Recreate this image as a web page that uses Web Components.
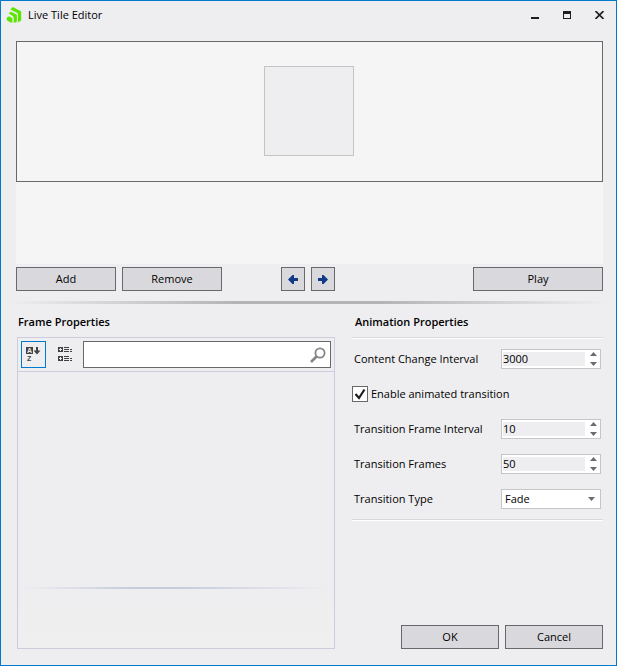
<!DOCTYPE html>
<html lang="en">
<head>
<meta charset="utf-8">
<title>Live Tile Editor</title>
<style>
  body { margin: 0; font: 11px/16px "Open Sans", "Noto Sans", sans-serif; color: #000; background: #eeeef2; }
</style>
</head>
<body>
<tile-editor></tile-editor>
<script>
const base = `:host, *, *::before { box-sizing: border-box; } button, input, select { font: inherit; color: inherit; margin: 0; border-radius: 0; } svg { display: block; }`;

function define(name, template, setup) {
  customElements.define(name, class extends HTMLElement {
    connectedCallback() {
      if (this.shadowRoot) return;
      const root = this.attachShadow({ mode: 'open' });
      root.innerHTML = template(this);
      if (setup) setup(this, root);
    }
  });
}

define('push-button', host => `
  <style>${base}
    :host { display: block; }
    button { display: flex; width: 100%; height: 24px; padding: 0; align-items: center; justify-content: center; background: #d9d9dd; border: 1px solid #696969; }
  </style>
  <button type="button" ${host.getAttribute('label') ? `aria-label="${host.getAttribute('label')}"` : ''}><slot></slot></button>`);

define('title-bar', () => `
  <style>${base}
    :host { display: flex; height: 30px; align-items: center; padding: 0 5px 2px; }
    h1 { font: inherit; margin: 0 auto 0 6px; }
    button { width: 24px; height: 24px; margin-left: 8px; padding: 0; border: 0; background: none; display: grid; place-items: center; }
    button:first-of-type { margin-left: 0; }
  </style>
  <svg width="16" height="16" viewBox="0 0 16 16" fill="#5ce500" aria-hidden="true">
    <path d="M4.400 2.600 6.800 0l8.400 4.400v9l-3.400 2V6.300z"/>
    <path d="M2.600 6.200 5.200 4.400l6 3v5.400l-.8 2.600-3 .2V9.400z"/>
    <path d="M.8 10.600 3.200 9.200l3.400 2v4.300H4.400L.8 13.200z"/>
    <path d="M4 3.800 11.400 7.600v6.800M2.300 8.100l4.800 2.700v4.700" fill="none" stroke="#eeeef2" stroke-width=".8"/>
  </svg>
  <h1>Live Tile Editor</h1>
  <button type="button" aria-label="Minimize"><svg width="8" height="8" shape-rendering="crispEdges"><path fill="#1e1e1e" d="M0 6h8v2H0z"/></svg></button>
  <button type="button" aria-label="Maximize"><svg width="8" height="8" shape-rendering="crispEdges"><path fill="#1e1e1e" fill-rule="evenodd" d="M0 0h8v8H0zM1 3v4h6V3z"/></svg></button>
  <button type="button" aria-label="Close"><svg width="9" height="8" viewBox="0 0 9 8"><path d="M.5 0l8 8M8.500 0l-8 8" stroke="#1e1e1e" stroke-width="1.600"/></svg></button>`);

define('tile-stage', () => `
  <style>${base}
    :host { display: block; background: #f5f5f5; }
    .preview { height: 141px; border: 1px solid #696969; display: grid; justify-content: center; padding: 24px 2px 0 0; }
    .tile { width: 90px; height: 90px; border: 1px solid #c4c4c5; background: #eeeef0; }
    .frames { height: 82px; }
  </style>
  <div class="preview"><div class="tile"></div></div>
  <div class="frames"></div>`);

define('frame-actions', () => `
  <style>${base}
    :host { display: grid; grid-template-columns: 1fr auto 1fr; align-items: center; }
    div { display: flex; gap: 6px; }
    .edit push-button { width: 100px; }
    .move { padding-right: 4px; }
    .move push-button { width: 24px; }
    .play { justify-content: flex-end; }
    .play push-button { width: 130px; }
    svg { fill: #103a88; }
  </style>
  <div class="edit"><push-button>Add</push-button><push-button>Remove</push-button></div>
  <div class="move">
    <push-button label="Move left"><svg width="10" height="9" viewBox="0 0 10 9"><path d="M0 4.500 4.500 0H6v3h4v3H6v3H4.500z"/></svg></push-button>
    <push-button label="Move right"><svg width="10" height="9" viewBox="0 0 10 9"><path d="M10 4.500 5.500 0H4v3H0v3h4v3h1.500z"/></svg></push-button>
  </div>
  <div class="play"><push-button>Play</push-button></div>`);

define('frame-properties', () => `
  <style>${base}
    :host { display: flex; flex-direction: column; border: 1px solid #ccccdc; }
    .tools { display: flex; height: 34px; padding: 3px; align-items: center; border-bottom: 1px solid #ccccdc; }
    .tool { flex: none; width: 25px; height: 27px; padding: 0; border: 1px solid transparent; background: none; display: grid; place-items: center; }
    .tool[aria-pressed=true] { border-color: #007acc; }
    .tool + .tool { margin-left: 7px; }
    .tool svg { overflow: visible; }
    .search { flex: 1; min-width: 0; height: 27px; margin-left: 5px; display: flex; align-items: center; background: #fff; border: 1px solid #696969; padding-right: 4px; }
    input { flex: 1; min-width: 0; height: 100%; border: 0; padding: 0 4px; background: none; outline: 0; }
    .list { flex: 1; }
    .help { height: 61px; background: linear-gradient(#eeeef0, #efefef); }
    .help::before { content: ""; display: block; height: 2px; margin: 0 5px; background: linear-gradient(90deg, #eeeef0, #c8cbdc 35%, #c8cbdc 52%, #eeeef0); }
    text { font: bold 7px/7px "Liberation Sans", sans-serif; }
  </style>
  <div class="tools">
    <button class="tool" type="button" aria-label="Sort alphabetically" aria-pressed="true">
      <svg width="15" height="15" viewBox="0 0 15 15" fill="#424242" aria-hidden="true">
        <path d="M0 0h7v7H0zM10 0h2v3.500h2.500L11 7.500 7.500 3.500H10z"/>
        <text x="1" y="6" fill="#eeeef2">A</text><text x="1" y="14">Z</text>
      </svg>
    </button>
    <button class="tool" type="button" aria-label="Group by category" aria-pressed="false">
      <svg width="15" height="15" viewBox="0 0 15 15" fill="#424242" shape-rendering="crispEdges" aria-hidden="true">
        <path fill-rule="evenodd" d="M0 0h5v5H0zM2 1v1H1v1h1v1h1V3h1V2H3V1zM0 9h5v5H0zM2 10v1H1v1h1v1h1v-1h1v-1H3v-1z"/>
        <path d="M6 0h5v1H6zM6 2h5v1H6zM6 4h5v1H6zM12 2h2v1h-2zM12 4h2v1h-2zM6 9h5v1H6zM6 11h5v1H6zM6 13h5v1H6zM12 11h2v1h-2zM12 13h2v1h-2z"/>
      </svg>
    </button>
    <label class="search"><input type="text" aria-label="Search properties">
      <svg width="16" height="16" viewBox="0 0 16 16" fill="none" stroke="#858585" aria-hidden="true"><circle cx="10" cy="6" r="4.600" stroke-width="1.800"/><path d="M6.500 9.500 1 15" stroke-width="2.600"/></svg>
    </label>
  </div>
  <div class="list"></div>
  <div class="help"></div>`);

define('spin-row', host => `
  <style>${base}
    :host { display: flex; align-items: center; justify-content: space-between; height: 20px; }
    .box { display: flex; width: 100px; height: 20px; padding: 2px 0 2px 1px; background: #fff; border: 1px solid #c6c6c9; }
    input { flex: 1; min-width: 0; height: 14px; padding: 0; border: 0; background: #eeeef0; appearance: textfield; outline: 0; }
    input::-webkit-inner-spin-button { appearance: none; }
    .steps { display: flex; flex-direction: column; justify-content: space-between; width: 15px; padding-left: 2px; }
    .steps button { height: 4px; padding: 0; border: 0; background: none; display: grid; place-items: center; }
  </style>
  <label for="n">${host.getAttribute('label')}</label>
  <div class="box">
    <input id="n" type="number" value="${host.getAttribute('value')}">
    <div class="steps">
      <button type="button" aria-label="Increase"><svg width="7" height="4" fill="#6b6b6b"><path d="M0 4 3.500 0 7 4z"/></svg></button>
      <button type="button" aria-label="Decrease"><svg width="7" height="4" fill="#6b6b6b"><path d="M0 0h7L3.500 4z"/></svg></button>
    </div>
  </div>`, (host, root) => {
    const input = root.querySelector('input');
    const [up, down] = root.querySelectorAll('button');
    up.onclick = () => input.stepUp();
    down.onclick = () => input.stepDown();
  });

define('check-row', host => `
  <style>${base}
    :host { display: block; }
    label { display: flex; align-items: center; gap: 3px; height: 20px; }
    span { display: grid; }
    input, svg { grid-area: 1 / 1; }
    input { appearance: none; width: 16px; height: 16px; background: #fff; border: 1px solid #696969; }
    svg { pointer-events: none; visibility: hidden; }
    input:checked + svg { visibility: visible; }
  </style>
  <label><span><input type="checkbox" checked><svg width="16" height="16" viewBox="0 0 16 16" fill="none" stroke="#1e1e1e" stroke-width="2.200"><path d="M3.500 8 7 12l5.500-8.500"/></svg></span><slot></slot></label>`);

define('choice-row', host => `
  <style>${base}
    :host { display: flex; align-items: center; justify-content: space-between; height: 20px; }
    .box { display: grid; width: 100px; align-items: center; }
    select, svg { grid-area: 1 / 1; }
    select { appearance: none; width: 100%; height: 20px; padding: 0 16px 0 3px; background: #fff; border: 1px solid #c6c6c9; }
    svg { justify-self: end; margin-right: 6px; pointer-events: none; }
  </style>
  <label for="s">${host.getAttribute('label')}</label>
  <div class="box"><select id="s"><option>${host.getAttribute('value')}</option></select>
  <svg width="7" height="4" fill="#6b6b6b"><path d="M0 0h7L3.500 4z"/></svg></div>`);

define('animation-properties', () => `
  <style>${base}
    :host { display: block; }
    .rows { border: solid #d8d8dd; border-width: 1px 0; box-shadow: inset 0 1px #fff, 0 1px #fff; padding: 11px 2px 10px; display: grid; gap: 15px; }
    check-row { margin-left: -2px; }
  </style>
  <div class="rows">
    <spin-row label="Content Change Interval" value="3000"></spin-row>
    <check-row>Enable animated transition</check-row>
    <spin-row label="Transition Frame Interval" value="10"></spin-row>
    <spin-row label="Transition Frames" value="50"></spin-row>
    <choice-row label="Transition Type" value="Fade"></choice-row>
  </div>`);

define('tile-editor', () => `
  <style>${base}
    :host { display: flex; flex-direction: column; min-height: 100vh; border: 1px solid #007acc; background: #eeeef0; }
    tile-stage { margin: 10px 13px 0 15px; }
    frame-actions { margin: 3px 13px 0 15px; }
    .divider { height: 3px; margin: 10px 7px 0; background: linear-gradient(90deg, #eeeef0, #b4b4b6 38%, #b4b4b6 62%, #eeeef0); }
    main { flex: 1; display: grid; grid-template-columns: 318fr 251fr; column-gap: 17px; padding: 10px 13px 16px 16px; }
    section { display: flex; flex-direction: column; }
    h2 { font: inherit; font-weight: 600; margin: 0 0 7px; padding-left: 1px; }
    .right h2 { padding-left: 3px; }
    frame-properties { flex: 1; }
    .dialog { display: flex; justify-content: flex-end; gap: 6px; margin-top: auto; }
    .dialog push-button { width: 98px; }
  </style>
  <title-bar></title-bar>
  <tile-stage></tile-stage>
  <frame-actions></frame-actions>
  <div class="divider"></div>
  <main>
    <section><h2>Frame Properties</h2><frame-properties></frame-properties></section>
    <section class="right"><h2>Animation Properties</h2><animation-properties></animation-properties>
      <div class="dialog"><push-button>OK</push-button><push-button>Cancel</push-button></div>
    </section>
  </main>`);
</script>
</body>
</html>
